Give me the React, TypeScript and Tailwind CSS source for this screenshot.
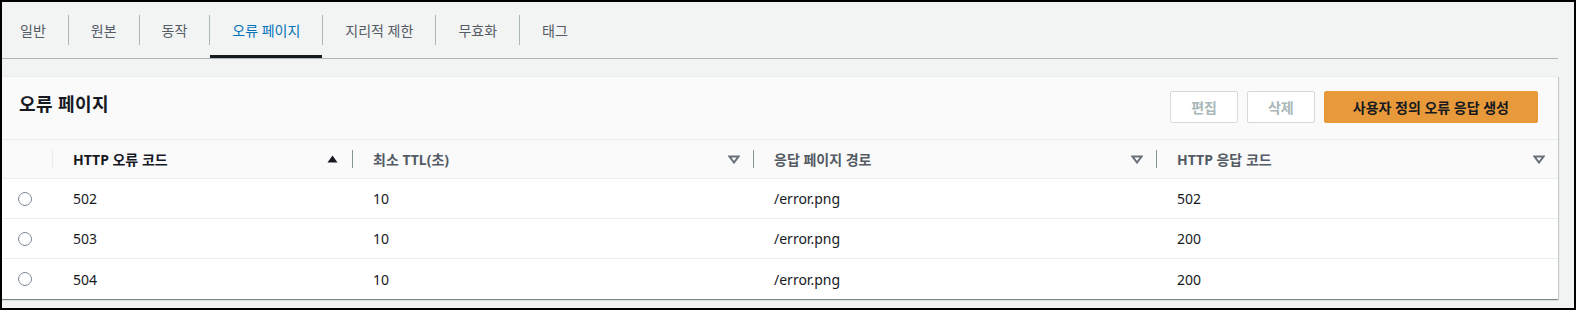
import React from "react";

const tabs = ["일반", "원본", "동작", "오류 페이지", "지리적 제한", "무효화", "태그"];
const rows = [
  ["502", "10", "/error.png", "502"],
  ["503", "10", "/error.png", "200"],
  ["504", "10", "/error.png", "200"],
];

function SortUp() {
  return (
    <svg width="11" height="8" viewBox="0 0 11 8">
      <path d="M5.5 0.5 L10.5 7.5 L0.5 7.5 Z" fill="#16191f" />
    </svg>
  );
}
function SortNone() {
  return (
    <svg width="12" height="9" viewBox="0 0 12 9">
      <path d="M1.5 1.5 L10.5 1.5 L6 7.5 Z" fill="none" stroke="#687078" strokeWidth="2" strokeLinejoin="miter" />
    </svg>
  );
}

function HeaderCell({ label }: { label: string }) {
  return (
    <div className="flex items-center h-full">
      <span className="w-px h-[18px] bg-[#879596]" />
      <span className="flex-1 pl-5 text-[14px] font-bold text-[#545b64]">{label}</span>
      <span className="pr-[13px] flex items-center">
        <SortNone />
      </span>
    </div>
  );
}

export default function App() {
  return (
    <div
      className="w-[1576px] h-[310px] border-2 border-black bg-[#f2f3f3] overflow-hidden text-[#16191f]"
      style={{ fontFamily: '"Noto Sans", "Noto Sans CJK KR", sans-serif' }}
    >
      {/* Tabs */}
      <div className="mr-[16px] h-[57px] border-b border-[#aab7b8] flex items-stretch">
        {tabs.map((t, i) => (
          <React.Fragment key={t}>
            {i > 0 && <span className="w-px h-[30px] self-center bg-[#aab7b8]" />}
            <div
              className={`relative flex items-center text-[14px] ${i === 0 ? "pl-[18px] pr-[22px]" : "px-[22px]"} ${
                i === 3 ? "text-[#0073bb]" : "text-[#545b64]"
              }`}
            >
              {t}
              {i === 3 && <span className="absolute left-0 right-0 bottom-0 h-[3px] bg-[#16191f]" />}
            </div>
          </React.Fragment>
        ))}
      </div>

      {/* Panel */}
      <div className="mt-[17px] mr-[16px] bg-white border-t border-[#eaeded] shadow-[0_1px_1px_0_rgba(0,28,36,0.3),1px_1px_1px_0_rgba(0,28,36,0.15),-1px_1px_1px_0_rgba(0,28,36,0.15)]">
        <div className="bg-[#fafafa] border-b border-[#eaeded] pt-[14px] pb-[16px] pl-[17px] pr-[20px] flex items-center justify-between">
          <h2 className="text-[18px] font-bold leading-[24px] tracking-[0.4px] text-[#16191f] -mt-[6px]">오류 페이지</h2>
          <div className="flex gap-[9px]">
            <button className="h-8 px-5 border border-[#d5dbdb] bg-white rounded-[2px] text-[14px] font-bold text-[#aab7b8]">
              편집
            </button>
            <button className="h-8 px-5 border border-[#d5dbdb] bg-white rounded-[2px] text-[14px] font-bold text-[#aab7b8]">
              삭제
            </button>
            <button className="h-8 px-[28px] border border-[#e8993a] bg-[#e8993a] rounded-[2px] text-[14px] font-bold text-[#16191f]">
              사용자 정의 오류 응답 생성
            </button>
          </div>
        </div>

        {/* Table header */}
        <div className="grid grid-cols-[50px_300px_401px_403px_1fr] h-[39px] bg-[#fafafa] border-b border-[#eaeded]">
          <div />
          <div className="flex items-center h-full">
            <span className="w-px h-[18px] bg-[#eaeded]" />
            <span className="flex-1 pl-5 text-[14px] font-bold text-[#16191f]">HTTP 오류 코드</span>
            <span className="pr-[14px] flex items-center">
              <SortUp />
            </span>
          </div>
          <HeaderCell label="최소 TTL(초)" />
          <HeaderCell label="응답 페이지 경로" />
          <HeaderCell label="HTTP 응답 코드" />
        </div>

        {/* Rows */}
        {rows.map((r, i) => (
          <div
            key={r[0]}
            className={`grid grid-cols-[50px_300px_401px_403px_1fr] h-10 items-center text-[14px] text-[#16191f] ${
              i < rows.length - 1 ? "border-b border-[#eaeded]" : ""
            }`}
          >
            <div className="pl-[16px] flex items-center">
              <span className="w-[14px] h-[14px] rounded-full border border-[#7d8998] bg-white" />
            </div>
            <div className="pl-[21px]">{r[0]}</div>
            <div className="pl-[21px]">{r[1]}</div>
            <div className="pl-[21px]">{r[2]}</div>
            <div className="pl-[21px]">{r[3]}</div>
          </div>
        ))}
      </div>
    </div>
  );
}
